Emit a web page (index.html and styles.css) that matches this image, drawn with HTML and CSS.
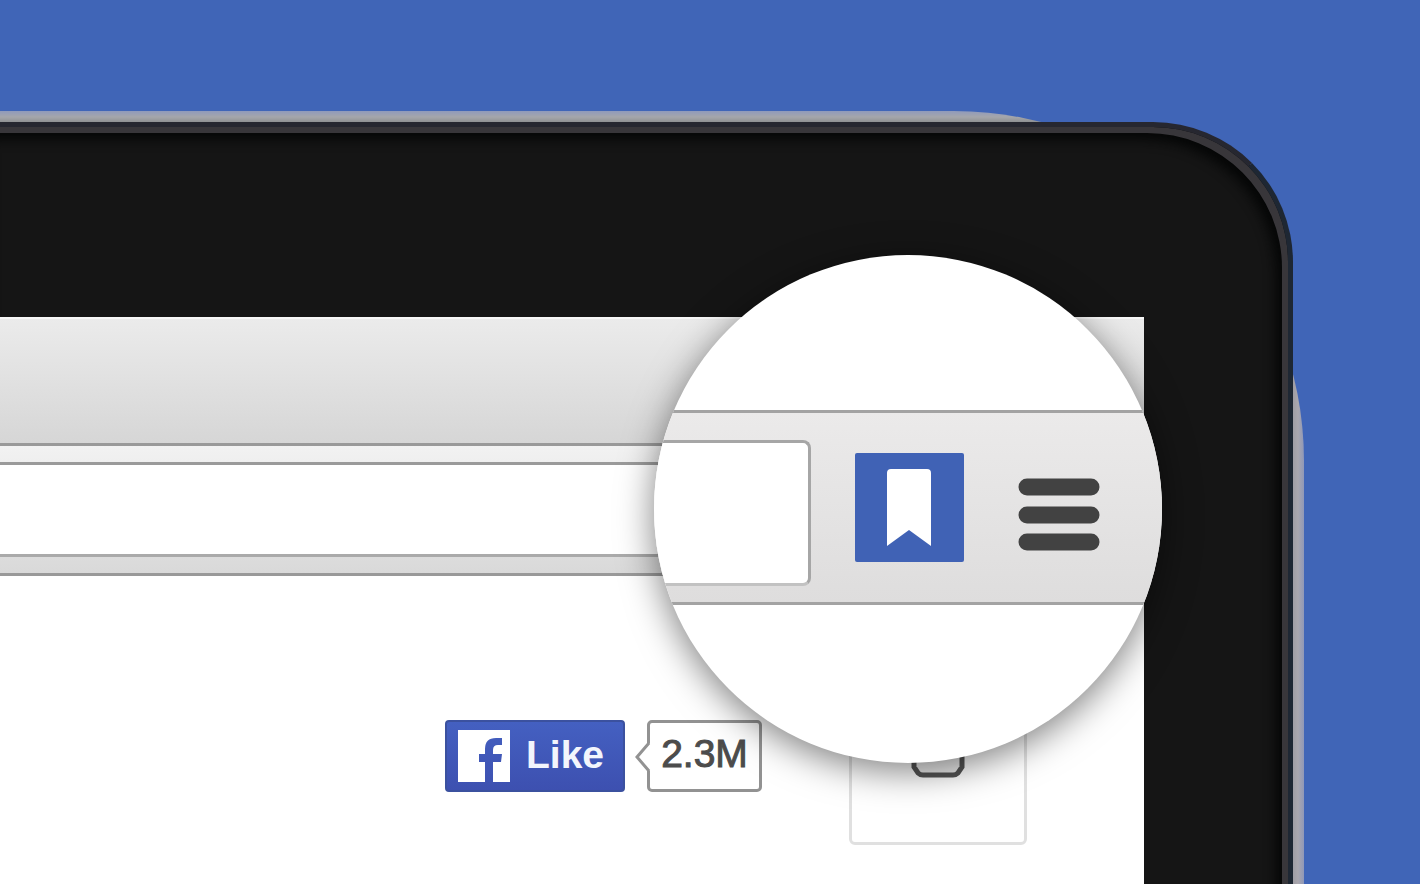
FILE: index.html
```html
<!DOCTYPE html>
<html lang="en">
<head>
<meta charset="utf-8">
<meta name="viewport" content="width=device-width, initial-scale=1">
<title>Save to bookmarks</title>
<link rel="stylesheet" href="styles.css">
</head>
<body>
<main class="stage">
  <div class="lid">
    <div class="bezel">
      <div class="screen">
        <div class="tabs"></div>
        <div class="toolbar">
          <input class="address" type="text" aria-label="Address">
        </div>
        <div class="page">
          <div class="social">
            <button class="like" type="button">
              <svg class="like-logo" viewBox="0 0 52 52" aria-hidden="true">
                <path fill="#fff" d="M0 0h52v52H35V32h8l1-8h-9v-4q0-5 5-5h4V8h-6Q27 8 27 19v5h-6v8h6v20H0z"/>
              </svg>
              <span>Like</span>
            </button>
            <div class="count">
              <svg class="count-tip" viewBox="0 0 16 32" aria-hidden="true">
                <path fill="#fff" d="M16 1v30L2 16z"/>
                <path fill="none" stroke="#929292" stroke-width="3" d="M14 2L2 16l12 14"/>
              </svg>
              <span>2.3M</span>
            </div>
          </div>
          <button class="tile" type="button" aria-label="Save">
            <svg class="tile-icon" viewBox="0 0 54 44" aria-hidden="true">
              <path fill="#eee" stroke="#555" stroke-width="5" d="M3 3h48v30l-4 6q-2 2-5 2H12q-3 0-5-2l-4-6z"/>
            </svg>
          </button>
        </div>
        <div class="lens">
          <div class="lens-bar">
            <input class="lens-address" type="text" aria-label="Enlarged address">
            <button class="bookmark" type="button" aria-label="Bookmark">
              <svg class="bookmark-icon" viewBox="0 0 109 109" aria-hidden="true">
                <path fill="#fff" d="M32 20q0-4 4-4h36q4 0 4 4v73L54 77 32 93z"/>
              </svg>
            </button>
            <button class="menu" type="button" aria-label="Menu">
              <svg class="menu-icon" viewBox="0 0 82 88" aria-hidden="true">
                <path stroke="#424242" stroke-width="17" stroke-linecap="round" d="M9 23h64M9 51h64M9 78h64"/>
              </svg>
            </button>
          </div>
        </div>
      </div>
    </div>
  </div>
</main>
</body>
</html>
```
FILE: styles.css
```css
* {
  box-sizing: border-box;
}

body {
  margin: 0;
  background: #4065b7;
  font-family: "Liberation Sans", Arial, sans-serif;
}

button,
input {
  margin: 0;
  padding: 0;
  border: 0;
  border-radius: 0;
  font: inherit;
}

svg {
  display: block;
}

.stage {
  display: flex;
  min-height: 100vh;
  padding: 111px 116px 0 0;
  overflow: hidden;
}

.lid {
  display: flex;
  flex: 1;
  padding: 11px 11px 0 0;
  border-radius: 0 350px 0 0;
  background:
    linear-gradient(to left, #8f98b8, #aaa7ae 6px, #9f9da4 11px, transparent 11px),
    linear-gradient(#909abb, #a5a6ab 6px, #8f9193 11px);
}

.bezel {
  display: flex;
  flex: 1;
  padding: 190px 144px 0 0;
  border: solid #262730;
  border-width: 5px 5px 0 0;
  border-right-color: #1e2733;
  border-radius: 0 140px 0 0;
  background: #151515;
  box-shadow:
    inset -6px 6px 0 #38363a,
    inset -12px 12px 12px #050606;
}

.screen {
  position: relative;
  display: flex;
  flex: 1;
  flex-direction: column;
  background: #fff;
}

.tabs {
  height: 126px;
  border-top: 2px solid #f7f7f7;
  background: linear-gradient(#ebebeb, #d6d6d6);
}

.toolbar {
  padding: 16px 0;
  border: solid #999;
  border-width: 3px 0;
  background: linear-gradient(#f2f2f2, #d9d9d9);
}

.address {
  display: block;
  width: 100%;
  height: 95px;
  border: solid #9a9a9a;
  border-width: 3px 0;
  border-bottom-color: #aaa;
  background: #fff;
}

.page {
  display: flex;
  align-items: center;
  justify-content: flex-end;
  gap: 87px;
  padding: 91px 117px 39px 0;
}

.social {
  display: flex;
  gap: 22px;
}

.like {
  display: flex;
  align-items: center;
  gap: 16px;
  width: 180px;
  height: 72px;
  padding: 0 11px;
  border: 2px solid #3b519f;
  border-radius: 4px;
  background: linear-gradient(#4460c1, #3d50b0);
  color: #f3f5fc;
  font-size: 39px;
  font-weight: 700;
  line-height: 40px;
}

.like-logo {
  flex: none;
  width: 52px;
  height: 52px;
}

.like span {
  padding-bottom: 2px;
}

.count {
  position: relative;
  display: flex;
  align-items: center;
  justify-content: center;
  width: 115px;
  height: 72px;
  padding-bottom: 4px;
  border: 3px solid #929292;
  border-radius: 5px;
  color: #4c4c4c;
  font-size: 39px;
  line-height: 40px;
  -webkit-text-stroke: 1px #4c4c4c;
}

.count-tip {
  position: absolute;
  top: 18px;
  left: -15px;
  width: 16px;
  height: 32px;
}

.tile {
  display: flex;
  align-items: center;
  justify-content: center;
  width: 178px;
  height: 178px;
  border: 3px solid #e0e0e0;
  border-radius: 6px;
  background: #fff;
}

.tile-icon {
  width: 54px;
  height: 44px;
}

.lens {
  position: absolute;
  top: -62px;
  right: -18px;
  width: 508px;
  height: 508px;
  padding-top: 155px;
  overflow: hidden;
  border-radius: 50%;
  background: #fff;
  box-shadow: 0 8px 36px rgba(0, 0, 0, .5);
}

.lens-bar {
  display: flex;
  align-items: center;
  padding-right: 62px;
  border: solid #a3a3a3;
  border-width: 3px 0;
  background: linear-gradient(#ebeaea, #dedddd);
}

.lens-address {
  flex: 1;
  min-width: 0;
  height: 146px;
  margin: 27px 44px 16px 0;
  border: 3px solid #a6a6a6;
  border-bottom-color: #c2c2c2;
  border-left: 0;
  border-radius: 0 8px 8px 0;
  background: #fff;
}

.bookmark {
  width: 109px;
  height: 109px;
  margin-right: 54px;
  border-radius: 2px;
  background: #4062b5;
}

.bookmark-icon {
  width: 109px;
  height: 109px;
}

.menu {
  background: none;
}

.menu-icon {
  width: 82px;
  height: 88px;
}
```
